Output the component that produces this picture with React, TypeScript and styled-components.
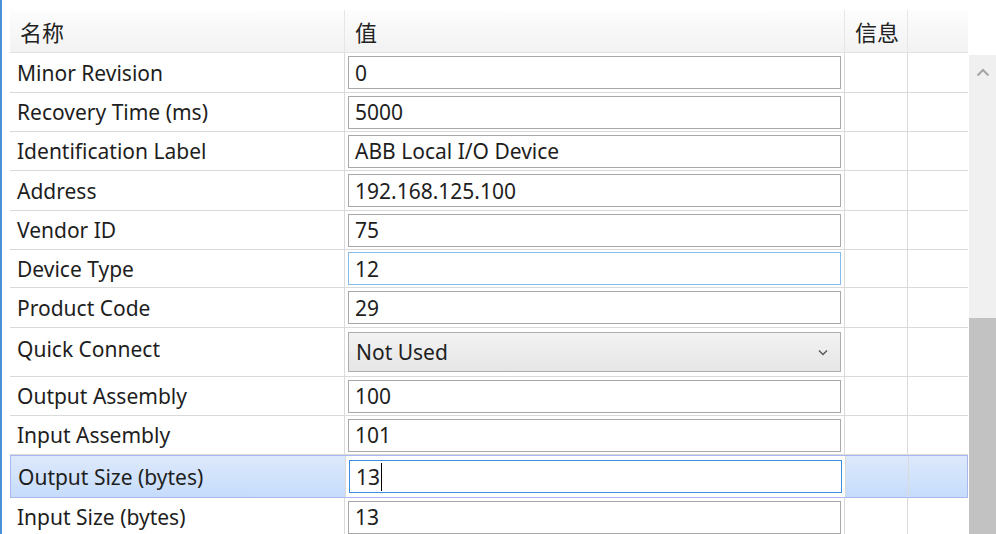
import React from "react";
import styled, { createGlobalStyle, css } from "styled-components";

const GlobalStyle = createGlobalStyle`
  html, body {
    margin: 0;
    padding: 0;
    background: #ffffff;
  }
  body {
    font-family: "Noto Sans", "Noto Sans CJK SC", sans-serif;
    color: #1e1e1e;
  }
`;

const Page = styled.div`
  display: flex;
  width: 996px;
  height: 534px;
  overflow: hidden;
  background: #ffffff;
  border-left: 2px solid #4a90d9;
  box-sizing: border-box;
`;

const Table = styled.div`
  width: 958px;
  margin-left: 8px;
  padding-top: 10px;
  display: flex;
  flex-direction: column;
`;

const Row = styled.div<{ h: number; selected?: boolean }>`
  display: grid;
  grid-template-columns: 335px 500px 63px 60px;
  height: ${(p) => p.h}px;
  box-sizing: border-box;
  border-bottom: 1px solid #dadada;
  flex-shrink: 0;
  ${(p) =>
    p.selected &&
    css`
      border: 1px solid #a9b6ef;
      background: linear-gradient(#dde9fc, #c6dcfb);
    `}
`;

const HeaderRow = styled.div`
  display: grid;
  grid-template-columns: 335px 500px 63px 60px;
  height: 43px;
  box-sizing: border-box;
  background: linear-gradient(#fdfdfd, #f2f2f2);
  border-bottom: 1px solid #e2e2e2;
  flex-shrink: 0;
`;

const HeaderCell = styled.div`
  display: flex;
  align-items: center;
  padding-left: 10px;
  font-family: "Noto Sans CJK SC", sans-serif;
  font-size: 22px;
  color: #222;
  border-right: 1px solid #e6e6e6;
  &:last-child {
    border-right: none;
  }
`;

const LabelCell = styled.div<{ top?: boolean }>`
  display: flex;
  align-items: ${(p) => (p.top ? "flex-start" : "center")};
  padding-left: 7px;
  padding-top: ${(p) => (p.top ? "7px" : "0")};
  font-size: 21px;
  border-right: 1px solid #dadada;
  white-space: nowrap;
`;

const ValueCell = styled.div<{ selected?: boolean }>`
  display: flex;
  align-items: center;
  padding: 0 3px;
  border-right: 1px solid #dadada;
  background: ${(p) => (p.selected ? "#ffffff" : "transparent")};
`;

const EmptyCell = styled.div`
  border-right: 1px solid #dadada;
  &:last-child {
    border-right: none;
  }
`;

const Field = styled.div<{ state?: "hover" | "focus" }>`
  flex: 1;
  height: 33px;
  box-sizing: border-box;
  border: 1px solid #a8a8a8;
  border-color: ${(p) =>
    p.state === "hover" ? "#86b9ec" : p.state === "focus" ? "#3c8fe0" : "#a8a8a8"};
  background: #ffffff;
  display: flex;
  align-items: center;
  padding-left: 6px;
  font-size: 21px;
  color: #1e1e1e;
`;

const Caret = styled.span`
  display: inline-block;
  width: 1px;
  height: 28px;
  background: #000;
  margin-left: 1px;
`;

const Select = styled.div`
  flex: 1;
  height: 40px;
  box-sizing: border-box;
  border: 1px solid #adadad;
  background: linear-gradient(#f2f2f2, #e6e6e6);
  display: flex;
  align-items: center;
  justify-content: space-between;
  padding: 0 12px 0 7px;
  font-size: 21px;
  color: #1e1e1e;
`;

const Scrollbar = styled.div`
  width: 27px;
  margin-left: 1px;
  margin-top: 55px;
  background: #f0f0f0;
  display: flex;
  flex-direction: column;
  align-items: center;
`;

const ArrowBox = styled.div`
  height: 34px;
  display: flex;
  align-items: center;
  justify-content: center;
`;

const Thumb = styled.div`
  margin-top: auto;
  width: 100%;
  height: 216px;
  background: #c2c2c2;
`;

type Item = {
  label: string;
  value: string;
  h: number;
  kind?: "select";
  state?: "hover" | "focus";
  selected?: boolean;
};

const items: Item[] = [
  { label: "Minor Revision", value: "0", h: 40 },
  { label: "Recovery Time (ms)", value: "5000", h: 39 },
  { label: "Identification Label", value: "ABB Local I/O Device", h: 39 },
  { label: "Address", value: "192.168.125.100", h: 40 },
  { label: "Vendor ID", value: "75", h: 39 },
  { label: "Device Type", value: "12", h: 38, state: "hover" },
  { label: "Product Code", value: "29", h: 40 },
  { label: "Quick Connect", value: "Not Used", h: 49, kind: "select" },
  { label: "Output Assembly", value: "100", h: 39 },
  { label: "Input Assembly", value: "101", h: 39 },
  { label: "Output Size (bytes)", value: "13", h: 43, state: "focus", selected: true },
  { label: "Input Size (bytes)", value: "13", h: 39 },
];

export default function App() {
  return (
    <>
      <GlobalStyle />
      <Page>
        <Table>
          <HeaderRow>
            <HeaderCell>名称</HeaderCell>
            <HeaderCell>值</HeaderCell>
            <HeaderCell>信息</HeaderCell>
            <HeaderCell />
          </HeaderRow>
          {items.map((it) => (
            <Row key={it.label} h={it.h} selected={it.selected}>
              <LabelCell top={it.kind === "select"}>{it.label}</LabelCell>
              <ValueCell selected={it.selected}>
                {it.kind === "select" ? (
                  <Select>
                    {it.value}
                    <svg width="10" height="7" viewBox="0 0 10 7">
                      <polyline
                        points="1,1.5 5,5.5 9,1.5"
                        fill="none"
                        stroke="#555"
                        strokeWidth="1.4"
                      />
                    </svg>
                  </Select>
                ) : (
                  <Field state={it.state}>
                    {it.value}
                    {it.state === "focus" && <Caret />}
                  </Field>
                )}
              </ValueCell>
              <EmptyCell />
              <EmptyCell />
            </Row>
          ))}
        </Table>
        <Scrollbar>
          <ArrowBox>
            <svg width="14" height="9" viewBox="0 0 14 9">
              <polyline
                points="1.5,7.5 7,2 12.5,7.5"
                fill="none"
                stroke="#a6a6a6"
                strokeWidth="2"
              />
            </svg>
          </ArrowBox>
          <Thumb />
        </Scrollbar>
      </Page>
    </>
  );
}
